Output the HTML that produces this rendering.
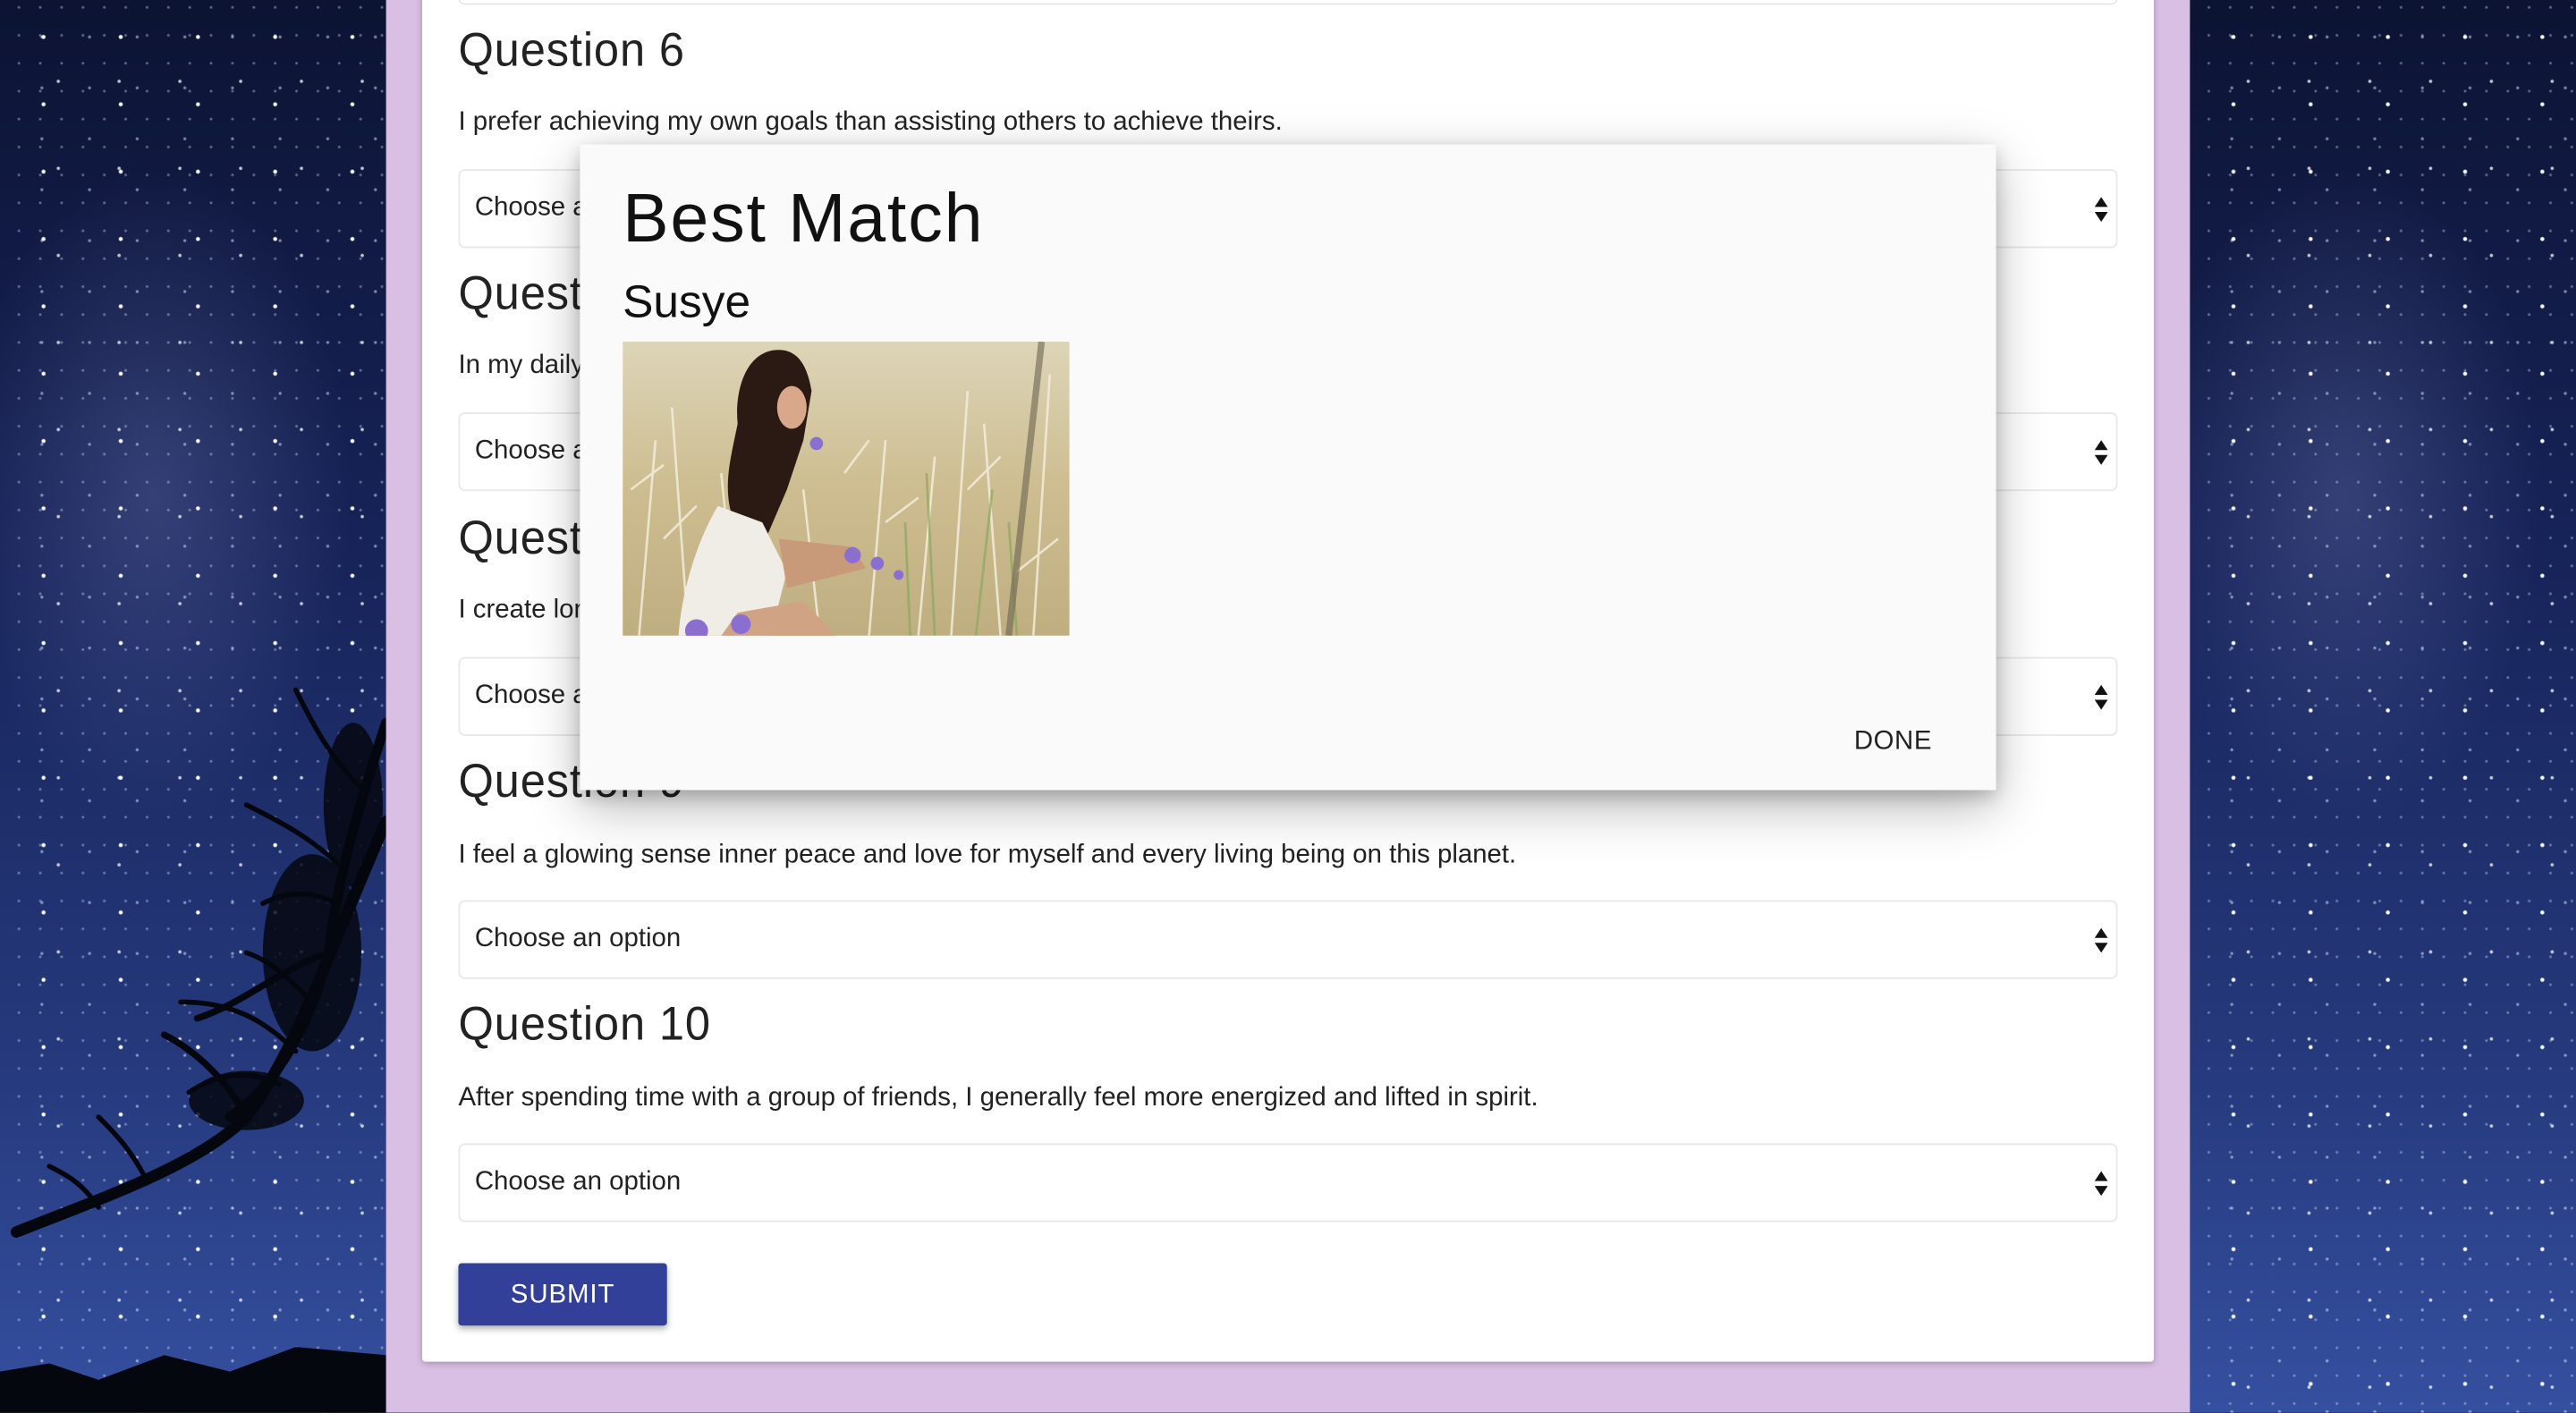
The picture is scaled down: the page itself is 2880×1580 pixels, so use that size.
<!DOCTYPE html>
<html><head><meta charset="utf-8">
<style>
html,body{margin:0;padding:0;width:2880px;height:1580px;overflow:hidden;background:#1d2c5c}
#s{position:absolute;left:0;top:0;width:1568px;height:860px;transform:scale(1.836735);transform-origin:0 0;font-family:"Liberation Sans",sans-serif;overflow:hidden}
.sky{position:absolute;top:0;height:860px;width:235px;
background:
radial-gradient(circle,#fff 0.9px,transparent 1.5px) 3px 2px/47px 41px,
radial-gradient(circle,rgba(255,255,255,.75) 0.7px,transparent 1.3px) 17px 23px/37px 53px,
radial-gradient(circle,rgba(220,230,255,.55) 0.6px,transparent 1.2px) 11px 7px/29px 31px,
radial-gradient(circle,rgba(220,230,255,.4) 0.5px,transparent 1.1px) 5px 13px/13px 17px,
radial-gradient(ellipse 120px 200px at 40% 35%,rgba(110,120,180,.35),transparent),
linear-gradient(180deg,#0c1333 0%,#17245a 40%,#25397c 75%,#3550a0 100%);}
.l{left:0}.r{left:1333px}
.band{position:absolute;left:235px;top:0;width:1098px;height:860px;background:#d9bfe3}
.card{position:absolute;left:257px;top:-10px;width:1054px;height:839px;background:#fff;box-shadow:0 1px 4px rgba(0,0,0,.25);border-radius:2px}
.q{position:absolute;left:279px;font-family:"Liberation Sans",sans-serif;font-size:29px;color:#222;letter-spacing:0.5px;transform:scaleX(0.95);transform-origin:0 0;font-weight:300}
.t{position:absolute;left:279px;font-size:16px;color:#222}
.sel{position:absolute;left:279px;width:1008px;height:46px;border:1px solid #e8e8e8;border-radius:4px;background:#fff}
.sel span{position:absolute;left:9px;top:14px;font-size:16px;color:#222}
.sel i{position:absolute;right:5px;top:16px;width:0;height:0;border-left:4px solid transparent;border-right:4px solid transparent;border-bottom:6px solid #111}
.sel b{position:absolute;right:5px;top:25px;width:0;height:0;border-left:4px solid transparent;border-right:4px solid transparent;border-top:6px solid #111}
.btn{position:absolute;left:279px;top:769px;width:127px;height:38px;background:#33409a;color:#fff;font-size:16px;text-align:center;line-height:40px;box-shadow:0 2px 4px rgba(0,0,0,.3);border-radius:2px;letter-spacing:.5px}
.dlg{position:absolute;left:353px;top:88px;width:862px;height:393px;background:#fafafa;box-shadow:0 10px 30px rgba(0,0,0,.28),0 4px 10px rgba(0,0,0,.2)}
</style></head><body><div id="s">
<div class="sky l"></div>
<svg style="position:absolute;left:0;top:380px" width="235" height="480" viewBox="0 0 235 480">
<g stroke="#05070f" fill="none" stroke-linecap="round">
<path d="M235 120 C200 200 180 260 150 300 C120 330 60 350 10 370" stroke-width="7"/>
<path d="M235 60 C215 120 205 160 200 200 C190 240 170 280 140 300" stroke-width="6"/>
<path d="M200 200 C170 210 150 230 120 240" stroke-width="4"/>
<path d="M150 300 C140 280 120 260 100 250" stroke-width="4"/>
<path d="M180 260 C160 240 140 230 110 230" stroke-width="3"/>
<path d="M210 150 C190 130 170 120 150 110" stroke-width="3"/>
<path d="M220 100 C200 80 190 60 180 40" stroke-width="3"/>
<path d="M90 340 C80 320 70 310 60 300" stroke-width="3"/>
<path d="M60 355 C50 340 40 335 30 330" stroke-width="3"/>
<path d="M170 280 C150 270 130 275 115 285" stroke-width="3"/>
<path d="M205 170 C185 160 170 165 160 170" stroke-width="3"/>
<path d="M190 230 C175 215 165 205 150 200" stroke-width="3"/>
</g>
<g fill="#05070f" opacity=".85"><ellipse cx="190" cy="200" rx="30" ry="60"/><ellipse cx="150" cy="290" rx="35" ry="18"/><ellipse cx="215" cy="110" rx="18" ry="50"/></g>
<path d="M0 480 L0 455 L30 450 L60 460 L100 445 L140 455 L180 440 L235 445 L235 480Z" fill="#05070f"/>
</svg>
<div class="sky r"></div>
<div class="band"></div>
<div class="card"></div>
<div class="sel" style="top:-45px"></div>
<div class="q" style="top:15px">Question 6</div>
<div class="t" style="top:66px">I prefer achieving my own goals than assisting others to achieve theirs.</div>
<div class="sel" style="top:103px"><span>Choose an option</span><i></i><b></b></div>
<div class="q" style="top:163px">Question 7</div>
<div class="t" style="top:214px">In my daily life I am mindful of others.</div>
<div class="sel" style="top:251px"><span>Choose an option</span><i></i><b></b></div>
<div class="q" style="top:312px">Question 8</div>
<div class="t" style="top:363px">I create long lasting relationships.</div>
<div class="sel" style="top:400px"><span>Choose an option</span><i></i><b></b></div>
<div class="q" style="top:460px">Question 9</div>
<div class="t" style="top:512px">I feel a glowing sense inner peace and love for myself and every living being on this planet.</div>
<div class="sel" style="top:548px"><span>Choose an option</span><i></i><b></b></div>
<div class="q" style="top:608px">Question 10</div>
<div class="t" style="top:660px">After spending time with a group of friends, I generally feel more energized and lifted in spirit.</div>
<div class="sel" style="top:696px"><span>Choose an option</span><i></i><b></b></div>
<div class="btn">SUBMIT</div>
<div class="dlg">
<div style="position:absolute;left:26px;top:21px;font-size:42px;color:#111;font-weight:300;letter-spacing:1px">Best Match</div>
<div style="position:absolute;left:26px;top:80px;font-size:28px;color:#111;font-weight:300">Susye</div>
<svg style="position:absolute;left:26px;top:120px" width="272" height="179" viewBox="0 0 272 179">
<defs><linearGradient id="g" x1="0" y1="0" x2="0" y2="1"><stop offset="0" stop-color="#ddd5b8"/><stop offset=".5" stop-color="#cdbd90"/><stop offset="1" stop-color="#bfae80"/></linearGradient></defs>
<rect width="272" height="179" fill="url(#g)"/>
<g stroke="#f3eddb" stroke-width="1.4" opacity=".85">
<path d="M10 179 L20 60M40 179 L30 40M200 179 L210 30M230 179 L220 50M250 179 L260 20M180 179 L190 70M150 179 L160 60M70 179 L60 80M120 179 L110 90M25 120 L45 100M210 90 L230 70M160 110 L180 95M240 140 L265 120M5 90 L25 75M135 80 L150 60"/></g>
<g stroke="#8aa860" stroke-width="1.5" opacity=".7"><path d="M190 179 L185 80M215 179 L225 90M240 179 L235 110M175 179 L172 110"/></g>
<path d="M95 5 C75 5 68 30 70 50 C66 70 60 90 68 110 L85 125 L100 90 L110 60 L115 30 C112 12 105 5 95 5Z" fill="#2b1a14"/>
<ellipse cx="103" cy="40" rx="9" ry="13" fill="#d9a88a"/>
<path d="M58 100 C46 120 36 150 34 179 L90 179 L100 140 L85 110Z" fill="#f0ece6"/>
<path d="M95 120 L140 125 L148 138 L100 150Z" fill="#c99a7a"/>
<path d="M70 165 L110 158 L130 179 L60 179Z" fill="#cfa384"/>
<g fill="#8a6fd0"><circle cx="45" cy="176" r="7"/><circle cx="72" cy="172" r="6"/><circle cx="140" cy="130" r="5"/><circle cx="155" cy="135" r="4"/><circle cx="118" cy="62" r="4"/><circle cx="168" cy="142" r="3"/></g>
<path d="M255 0 L235 179" stroke="#6b6450" stroke-width="4" opacity=".6"/>
</svg>
<div style="position:absolute;right:39px;top:355px;font-size:16px;color:#222;letter-spacing:.3px">DONE</div>
</div>
</div></body></html>
